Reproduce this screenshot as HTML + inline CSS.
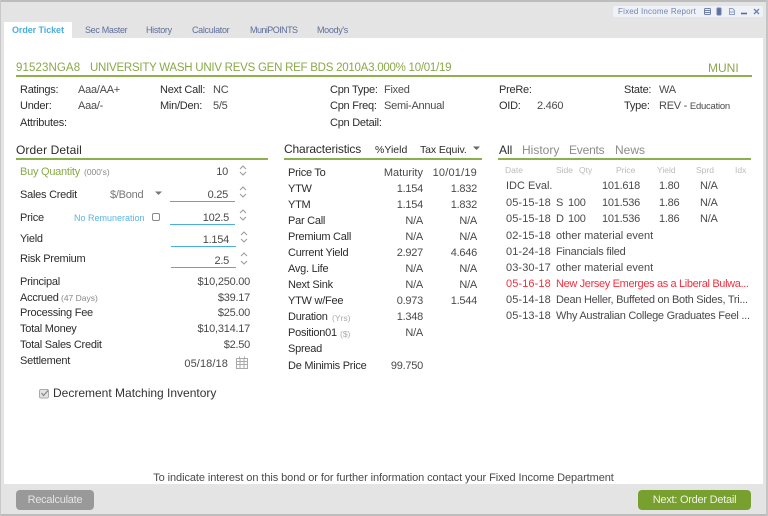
<!DOCTYPE html>
<html><head><meta charset="utf-8">
<style>
html,body{margin:0;padding:0}
body{width:768px;height:516px;overflow:hidden;background:#e4e4e4;position:relative;font-family:"Liberation Sans",sans-serif;font-size:11px;letter-spacing:-.25px;color:#4a4a4a}
#w{position:absolute;left:0;top:0;width:768px;height:516px;filter:blur(.35px)}
#w span{position:absolute;line-height:14px;height:14px;white-space:nowrap;margin-top:1px}
#w span span{position:static;margin:0}
#w i{position:absolute;display:block;font-style:normal}
.d{color:#2c2c2c}
.r{text-align:right}
#w .s{font-size:8.5px;color:#888;letter-spacing:0}
#w .h{font-size:8.5px;color:#bbb;letter-spacing:0;margin-top:0}
.g{color:#8aa84a}
#w .tab{font-size:9px;color:#5f6f9c;letter-spacing:-.32px;margin-top:0}
.dt{letter-spacing:.1px}
svg{position:absolute;overflow:visible}
</style></head><body><div id="w">
<i style="left:0;top:0;width:768px;height:2px;background:#bcbcbc"></i>
<i style="left:0;top:514px;width:768px;height:2px;background:#bcbcbc"></i>
<i style="left:766px;top:0;width:2px;height:516px;background:#c4c4c4"></i>
<i style="left:0;top:0;width:1px;height:516px;background:#c8c8c8"></i>
<i style="left:4px;top:38px;width:759px;height:446px;background:#fff"></i>
<i style="left:4px;top:22px;width:68px;height:16px;background:#fff"></i>

<span class="tab" style="left:12px;top:23px;color:#4aafe0;font-weight:bold;letter-spacing:-.08px">Order Ticket</span>
<span class="tab" style="left:85px;top:23px">Sec Master</span>
<span class="tab" style="left:146px;top:23px">History</span>
<span class="tab" style="left:192px;top:23px">Calculator</span>
<span class="tab" style="left:250px;top:23px;letter-spacing:-.55px">MuniPOINTS</span>
<span class="tab" style="left:317px;top:23px">Moody's</span>

<i style="left:613px;top:6px;width:150px;height:11px;background:#eef1f6;border-radius:2px"></i>
<span class="tab" style="left:618px;top:5px;font-size:8px;color:#7484ac;letter-spacing:.2px">Fixed Income Report</span>
<svg style="left:0;top:0" width="768" height="30" fill="none" stroke="#6f80a8">
<rect x="704.500" y="8.500" width="6" height="6" rx="1"/><path d="M705 10.500h5M705 12.500h5"/>
<rect x="717" y="8" width="4" height="7" rx=".7" fill="#5f70a0"/>
<path d="M729.500 8.500h3l2 2v4h-5zM730 12h4" stroke="#8fa0c4"/>
<path d="M741 13.500h6" stroke-width="1.600" stroke="#5a6a92"/>
<path d="M754 9l5 5M759 9l-5 5" stroke-width="1.300"/>
</svg>

<span class="g" style="left:16px;top:60px;font-size:11.5px;letter-spacing:.1px">91523NGA8</span>
<span class="g" style="left:90px;top:60px;font-size:11.5px;letter-spacing:-.25px">UNIVERSITY WASH UNIV REVS GEN REF BDS 2010A3.000% 10/01/19</span>
<span class="g" style="left:708px;top:60px;font-size:12px;letter-spacing:0">MUNI</span>
<i style="left:16px;top:75px;width:736px;height:2px;background:#8db04c"></i>

<span class="d" style="left:20px;top:82px">Ratings:</span><span style="left:78px;top:82px">Aaa/AA+</span>
<span class="d" style="left:160px;top:82px">Next Call:</span><span style="left:213px;top:82px">NC</span>
<span class="d" style="left:330px;top:82px">Cpn Type:</span><span style="left:384px;top:82px">Fixed</span>
<span class="d" style="left:499px;top:82px">PreRe:</span>
<span class="d" style="left:624px;top:82px">State:</span><span style="left:659px;top:82px">WA</span>
<span class="d" style="left:20px;top:98px">Under:</span><span style="left:78px;top:98px">Aaa/-</span>
<span class="d" style="left:160px;top:98px">Min/Den:</span><span style="left:213px;top:98px">5/5</span>
<span class="d" style="left:330px;top:98px">Cpn Freq:</span><span style="left:384px;top:98px">Semi-Annual</span>
<span class="d" style="left:499px;top:98px">OID:</span><span style="left:537px;top:98px">2.460</span>
<span class="d" style="left:624px;top:98px">Type:</span><span style="left:659px;top:98px">REV - <span style="font-size:9.500px">Education</span></span>
<span class="d" style="left:20px;top:115px">Attributes:</span>
<span class="d" style="left:330px;top:115px">Cpn Detail:</span>

<!-- Order detail -->
<span class="d" style="left:16px;top:142px;font-size:12px;letter-spacing:.1px">Order Detail</span>
<i style="left:16px;top:158px;width:252px;height:2px;background:#8db04c"></i>
<span class="g" style="left:20px;top:164px">Buy Quantity</span><span class="s" style="left:84px;top:164px">(000's)</span>
<span class="r" style="right:540px;top:164px">10</span>
<span class="d" style="left:20px;top:187px">Sales Credit</span><span style="left:110px;top:187px;color:#777">$/Bond</span>
<span class="r" style="right:540px;top:187px">0.25</span>
<i style="left:170px;top:201px;width:65px;height:1px;background:#4aafe0"></i>
<span class="d" style="left:20px;top:210px">Price</span><span style="left:74px;top:210px;font-size:9px;color:#5cb5e4;letter-spacing:0">No Remuneration</span>
<span class="r" style="right:539px;top:210px">102.5</span>
<i style="left:170px;top:224px;width:65px;height:1px;background:#4aafe0"></i>
<span class="d" style="left:20px;top:231px">Yield</span>
<span class="r" style="right:539px;top:232px">1.154</span>
<i style="left:171px;top:246px;width:65px;height:1px;background:#4aafe0"></i>
<span class="d" style="left:20px;top:251px">Risk Premium</span>
<span class="r" style="right:539px;top:253px">2.5</span>
<i style="left:171px;top:267px;width:65px;height:1px;background:#4aafe0"></i>

<svg style="left:0;top:0" width="768" height="516" fill="none" stroke="#999" stroke-width="1">
<path d="M240 169l3-3 3 3M240 172l3 3 3-3"/>
<path d="M240 190l3-3 3 3M240 194l3 3 3-3"/>
<path d="M240 213l3-3 3 3M240 217l3 3 3-3"/>
<path d="M241 235l3-3 3 3M241 239l3 3 3-3"/>
<path d="M241 256l3-3 3 3M241 261l3 3 3-3"/>
<path d="M155 191.500h7l-3.500 3.500z" fill="#777" stroke="none"/>
<path d="M473 146.500h7l-3.500 3.500z" fill="#666" stroke="none"/>
<rect x="152.500" y="213.500" width="7" height="7" rx="1.500" stroke="#888"/>
<g stroke="#aaa"><rect x="236.500" y="358.500" width="11" height="10"/><path d="M236.500 361.500h11M236.500 364.500h11M240 358v11M244 358v11M239.500 356.500v2M244.500 356.500v2"/></g>
<rect x="39.500" y="389.500" width="9" height="8.500" rx="1.500" stroke="#aaa" fill="#e4e4e4"/>
<path d="M41.500 393l2 2.500 4.500-5" stroke="#888" stroke-width="1.300"/>
</svg>

<span class="d" style="left:20px;top:274px">Principal</span><span class="r" style="right:518px;top:274px">$10,250.00</span>
<span class="d" style="left:20px;top:290px">Accrued</span><span class="s" style="left:61px;top:290px">(47 Days)</span><span class="r" style="right:518px;top:290px">$39.17</span>
<span class="d" style="left:20px;top:305px">Processing Fee</span><span class="r" style="right:518px;top:305px">$25.00</span>
<span class="d" style="left:20px;top:321px">Total Money</span><span class="r" style="right:518px;top:321px">$10,314.17</span>
<span class="d" style="left:20px;top:337px">Total Sales Credit</span><span class="r" style="right:518px;top:337px">$2.50</span>
<span class="d" style="left:20px;top:353px">Settlement</span><span class="r dt" style="right:540px;top:356px">05/18/18</span>
<span style="left:53px;top:385px;font-size:12px;letter-spacing:0;color:#333">Decrement Matching Inventory</span>

<!-- Characteristics -->
<span class="d" style="left:284px;top:141px;font-size:12px;letter-spacing:-.15px">Characteristics</span>
<span class="d" style="left:375px;top:142px;font-size:10.500px;letter-spacing:0">%Yield</span>
<span class="d" style="left:420px;top:142px;font-size:10.500px;letter-spacing:-.1px">Tax Equiv.</span>
<i style="left:284px;top:158px;width:198px;height:2px;background:#8db04c"></i>

<span class="d" style="left:288px;top:165px">Price To</span><span class="r" style="right:345px;top:165px;letter-spacing:0">Maturity</span><span class="r dt" style="right:291px;top:165px;letter-spacing:.2px">10/01/19</span>
<span class="d" style="left:288px;top:181px">YTW</span><span class="r" style="right:345px;top:181px">1.154</span><span class="r" style="right:291px;top:181px">1.832</span>
<span class="d" style="left:288px;top:197px">YTM</span><span class="r" style="right:345px;top:197px">1.154</span><span class="r" style="right:291px;top:197px">1.832</span>
<span class="d" style="left:288px;top:213px">Par Call</span><span class="r" style="right:345px;top:213px">N/A</span><span class="r" style="right:291px;top:213px">N/A</span>
<span class="d" style="left:288px;top:229px">Premium Call</span><span class="r" style="right:345px;top:229px">N/A</span><span class="r" style="right:291px;top:229px">N/A</span>
<span class="d" style="left:288px;top:245px">Current Yield</span><span class="r" style="right:345px;top:245px">2.927</span><span class="r" style="right:291px;top:245px">4.646</span>
<span class="d" style="left:288px;top:261px">Avg. Life</span><span class="r" style="right:345px;top:261px">N/A</span><span class="r" style="right:291px;top:261px">N/A</span>
<span class="d" style="left:288px;top:277px">Next Sink</span><span class="r" style="right:345px;top:277px">N/A</span><span class="r" style="right:291px;top:277px">N/A</span>
<span class="d" style="left:288px;top:293px">YTW w/Fee</span><span class="r" style="right:345px;top:293px">0.973</span><span class="r" style="right:291px;top:293px">1.544</span>
<span class="d" style="left:288px;top:309px">Duration</span><span class="s" style="left:332px;top:310px;color:#aaa">(Yrs)</span><span class="r" style="right:345px;top:309px">1.348</span>
<span class="d" style="left:288px;top:325px">Position01</span><span class="s" style="left:340px;top:326px;color:#aaa">($)</span><span class="r" style="right:345px;top:325px">N/A</span>
<span class="d" style="left:288px;top:341px">Spread</span>
<span class="d" style="left:288px;top:358px">De Minimis Price</span><span class="r" style="right:345px;top:358px">99.750</span>

<!-- Right -->
<span class="d" style="left:499px;top:142px;font-size:12px;letter-spacing:0">All</span>
<span style="left:522px;top:142px;font-size:12px;color:#8c8c8c;letter-spacing:0">History</span>
<span style="left:569px;top:142px;font-size:12px;color:#8c8c8c;letter-spacing:-.2px">Events</span>
<span style="left:615px;top:142px;font-size:12px;color:#8c8c8c;letter-spacing:0">News</span>
<i style="left:498px;top:158px;width:253px;height:2px;background:#8db04c"></i>
<span class="h" style="left:505px;top:163px">Date</span><span class="h" style="left:556px;top:163px">Side</span><span class="h" style="left:579px;top:163px">Qty</span><span class="h" style="left:616px;top:163px">Price</span><span class="h" style="left:657px;top:163px">Yield</span><span class="h" style="left:696px;top:163px">Sprd</span><span class="h" style="left:735px;top:163px">Idx</span>

<span style="left:506px;top:178px;letter-spacing:0">IDC Eval.</span><span style="left:602px;top:178px">101.618</span><span style="left:659px;top:178px">1.80</span><span style="left:700px;top:178px">N/A</span>
<span class="dt" style="left:506px;top:195px">05-15-18</span><span style="left:556px;top:195px">S</span><span style="left:568px;top:195px">100</span><span style="left:602px;top:195px">101.536</span><span style="left:659px;top:195px">1.86</span><span style="left:700px;top:195px">N/A</span>
<span class="dt" style="left:506px;top:211px">05-15-18</span><span style="left:556px;top:211px">D</span><span style="left:568px;top:211px">100</span><span style="left:602px;top:211px">101.536</span><span style="left:659px;top:211px">1.86</span><span style="left:700px;top:211px">N/A</span>
<span class="dt" style="left:506px;top:228px">02-15-18</span><span style="left:556px;top:228px;letter-spacing:0">other material event</span>
<span class="dt" style="left:506px;top:244px">01-24-18</span><span style="left:556px;top:244px;letter-spacing:-.2px">Financials filed</span>
<span class="dt" style="left:506px;top:260px">03-30-17</span><span style="left:556px;top:260px;letter-spacing:0">other material event</span>
<span class="dt" style="left:506px;top:276px;color:#f03040">05-16-18</span><span style="left:556px;top:276px;color:#f03040;letter-spacing:-.35px">New Jersey Emerges as a Liberal Bulwa...</span>
<span class="dt" style="left:506px;top:292px">05-14-18</span><span style="left:556px;top:292px;letter-spacing:-.27px">Dean Heller, Buffeted on Both Sides, Tri...</span>
<span class="dt" style="left:506px;top:308px">05-13-18</span><span style="left:556px;top:308px;letter-spacing:-.27px">Why Australian College Graduates Feel ...</span>

<span style="left:153px;top:470px;width:461px;text-align:center;letter-spacing:-.08px">To indicate interest on this bond or for further information contact your Fixed Income Department</span>

<i style="left:16px;top:490px;width:78px;height:20px;background:#999;border-radius:4px"></i>
<span style="left:16px;top:492px;width:78px;text-align:center;color:#e4e4e4">Recalculate</span>
<i style="left:638px;top:490px;width:113px;height:20px;background:#78a02e;border-radius:4px"></i>
<span style="left:638px;top:492px;width:113px;text-align:center;color:#eef3e0">Next: Order Detail</span>
</div></body></html>
